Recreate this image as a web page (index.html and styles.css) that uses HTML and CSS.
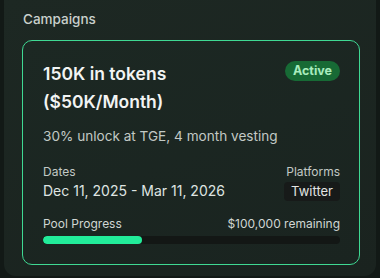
FILE: index.html
```html
<!DOCTYPE html>
<html lang="en">
<head>
  <meta charset="UTF-8" />
  <meta name="viewport" content="width=device-width, initial-scale=1.0"/>
  <title>Campaigns</title>
  <link rel="stylesheet" href="styles.css">
</head>
<body>

  <!-- PANEL DE CAMPAÑAS -->
  <div class="panel">
    <h3 class="panel-title">Campaigns</h3>

    <div class="campaign-card">
      <div class="card-head">
        <h2 class="card-title">150K in tokens ($50K/Month)</h2>
        <span class="badge-active">Active</span>
      </div>
      <p class="card-desc">30% unlock at TGE, 4 month vesting</p>

      <div class="card-row">
        <div>
          <div class="label">Dates</div>
          <div class="dates">Dec 11, 2025 - Mar 11, 2026</div>
        </div>
        <div class="platforms">
          <div class="label">Platforms</div>
          <span class="tag">Twitter</span>
        </div>
      </div>

      <div class="progress-head">
        <span>Pool Progress</span>
        <span>$100,000 remaining</span>
      </div>
      <div class="progress-bar">
        <div class="progress-fill" style="width: 33.3%"></div>
      </div>
    </div>
  </div>

</body>
</html>
```

FILE: styles.css
```css
body {
  font-family: 'Inter', 'Noto Sans', sans-serif;
  background: #121916;
  margin: 0;
  height: 100vh;
  overflow: hidden;
}

.panel {
  margin: 0 4px;
  height: 276px;
  box-sizing: border-box;
  padding: 10px 16px 0 18px;
  background: linear-gradient(160deg, #1d2823, #1a231f);
  border-radius: 0 0 12px 12px;
}

.panel-title {
  margin: 0 0 12px 1px;
  font-size: 13.5px;
  font-weight: 500;
  color: #c9d0cc;
  line-height: 18px;
}

.campaign-card {
  border: 1.5px solid #3fd993;
  border-radius: 10px;
  padding: 19px 19px 20px 20px;
  background: linear-gradient(160deg, #1c2823, #1a2420);
}

.card-head {
  display: flex;
  justify-content: space-between;
  align-items: flex-start;
}

.card-title {
  margin: 0;
  width: 170px;
  font-size: 17.5px;
  font-weight: 600;
  line-height: 28px;
  color: #f2f4f3;
}

.badge-active {
  margin-top: 1px;
  background: #176a35;
  color: #a8ecbd;
  font-size: 12.5px;
  font-weight: 700;
  padding: 2px 8px;
  line-height: 16px;
  border-radius: 12px;
}

.card-desc {
  margin: 11px 0 0;
  font-size: 13.6px;
  color: #c2c9c5;
  line-height: 18px;
}

.card-row {
  display: flex;
  justify-content: space-between;
  margin-top: 19px;
}

.label {
  font-size: 12px;
  color: #c2c9c5;
  line-height: 16px;
}

.dates {
  margin-top: 1px;
  font-size: 14px;
  color: #dfe4e1;
  line-height: 20px;
}

.platforms {
  display: flex;
  flex-direction: column;
  align-items: flex-end;
}

.tag {
  margin-top: 2px;
  background: #171a19;
  color: #e2e5e3;
  font-size: 13px;
  padding: 1px 7px;
  line-height: 17px;
  border-radius: 4px;
}

.progress-head {
  display: flex;
  justify-content: space-between;
  margin-top: 15px;
  font-size: 12px;
  color: #d0d6d3;
  line-height: 16px;
}

.progress-bar {
  margin-top: 4px;
  height: 8px;
  background: #131715;
  border-radius: 4px;
  overflow: hidden;
}

.progress-fill {
  height: 100%;
  background: #22ec9a;
  border-radius: 4px;
}
```
